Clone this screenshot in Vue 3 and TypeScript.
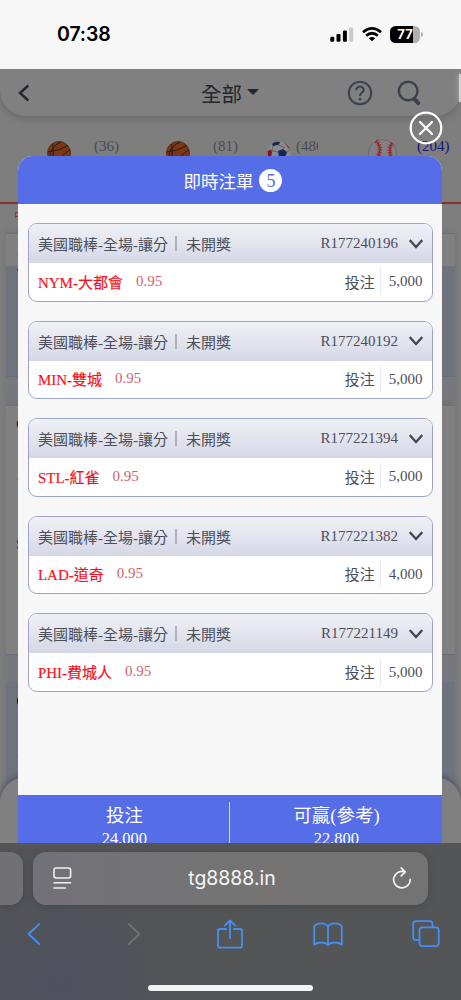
<script setup lang="ts">
interface Bet {
  team: string
  odds: string
  id: string
  stake: string
}

const bets: Bet[] = [
  { team: 'NYM-大都會', odds: '0.95', id: 'R177240196', stake: '5,000' },
  { team: 'MIN-雙城', odds: '0.95', id: 'R177240192', stake: '5,000' },
  { team: 'STL-紅雀', odds: '0.95', id: 'R177221394', stake: '5,000' },
  { team: 'LAD-道奇', odds: '0.95', id: 'R177221382', stake: '4,000' },
  { team: 'PHI-費城人', odds: '0.95', id: 'R177221149', stake: '5,000' },
]
</script>

<template>
  <div class="phone">
    <div class="status">
      <span class="clock">07:38</span>
      <div class="status-icons">
        <svg class="signal" width="24" height="16" viewBox="0 0 24 16">
          <rect x="0.3" y="9.8" width="4" height="5" rx="1.2" />
          <rect x="6.5" y="7" width="4" height="7.8" rx="1.2" />
          <rect x="12.9" y="3.6" width="4" height="11.2" rx="1.2" />
          <rect x="19.2" y="0.4" width="4" height="14.4" rx="1.2" fill="#c8c8c8" />
        </svg>
        <svg class="wifi" width="20" height="15" viewBox="0 0 20 15" fill="none" stroke="#000" stroke-width="2.7">
          <path d="M1 5.2Q10 -2.4 19 5.2" />
          <path d="M4.1 8.7Q10 3.8 15.9 8.7" />
          <path d="M6.8 11.2Q10 8.8 13.2 11.2L10 14.3Z" fill="#000" stroke="none" />
        </svg>
        <div class="battery"><span>77</span></div>
        <i class="battery-tip"></i>
      </div>
    </div>

    <div class="web">
      <div class="page">
        <div class="topbar">
          <svg class="back" width="12" height="18" viewBox="0 0 12 18" fill="none" stroke="#23262c" stroke-width="2.4"><path d="M10.3 1.5L2 9L10.3 16.5" /></svg>
          <div class="scope">全部<i></i></div>
          <svg class="help" width="26" height="26" viewBox="0 0 26 26" fill="none" stroke="#3c414e" stroke-width="2.1">
            <circle cx="13" cy="13" r="11.2" />
            <path d="M9.2 10.3C9.2 5.2 16.9 5.5 16.7 10C16.6 12.6 13 12.6 13 16" />
            <circle cx="13" cy="19.2" r="1.4" fill="#3c414e" stroke="none" />
          </svg>
          <svg class="search" width="25" height="26" viewBox="0 0 25 26" fill="none" stroke="#3c414e">
            <circle cx="11.2" cy="11" r="9.3" stroke-width="2.5" />
            <path d="M17.5 19.2L21.2 23" stroke-width="4" stroke-linecap="round" />
          </svg>
        </div>

        <div class="sports">
          <div class="sport basket">
            <svg width="24" height="24" viewBox="0 0 24 24" fill="none" stroke="#271b16" stroke-width="1">
              <circle cx="12" cy="12" r="11.5" fill="#7b3713" stroke="#5c321b" />
              <path d="M1 11Q12 10 21 4.5M5 3Q8 6 5 19M14 .8Q2 6 3 18M12 24Q14 13 23 9" />
            </svg>
            <span>(36)</span>
          </div>
          <div class="sport basket">
            <svg width="24" height="24" viewBox="0 0 24 24" fill="none" stroke="#271b16" stroke-width="1">
              <circle cx="12" cy="12" r="11.5" fill="#7b3713" stroke="#5c321b" />
              <path d="M1 11Q12 10 21 4.5M5 3Q8 6 5 19M14 .8Q2 6 3 18M12 24Q14 13 23 9" />
            </svg>
            <span>(81)</span>
          </div>
          <div class="sport soccer">
            <svg width="24" height="24" viewBox="0 0 24 24">
              <circle cx="12" cy="12" r="11.5" fill="#8a8a8c" />
              <path d="M5 3Q8 0 13 1L12 3.6L6 5ZM11 10L16 8L20 11L18 17L12 16Z" fill="#172754" />
              <path d="M.5 10L4 8.5L5 11L4 17L1 15ZM17 1.5Q22 4.5 23.3 9.5L20 5Z" fill="#84151e" />
              <path d="M6 5L5 10L11 11M11 4L17 6L16 8M20 11L23 9" fill="none" stroke="#555" stroke-width=".7" />
            </svg>
            <span>(486)</span>
          </div>
          <div class="sport baseball">
            <svg width="29" height="29" viewBox="0 0 29 29" fill="none">
              <circle cx="14.5" cy="14.5" r="14" fill="#828080" stroke="#6c6969" />
              <path d="M8 2Q16 9 7 23M24 4Q19 11 25 22" stroke="#932a31" stroke-width="1.6" />
              <path d="M8 2Q16 9 7 23M24 4Q19 11 25 22" stroke="#932a31" stroke-width="4.4" stroke-dasharray="1.1 1.3" />
            </svg>
            <span>(204)</span>
          </div>
        </div>

        <div class="league">中</div>
        <div class="panel">
          <div class="row match">1</div>
          <div class="row picked">7</div>
          <div class="row tinted"></div>
        </div>
        <div class="panel second">
          <div class="row tall"><b>C</b><span>1</span><span class="low">S</span></div>
          <div class="row tinted"></div>
          <div class="row picked long"><b>C</b><span>1</span></div>
        </div>
      </div>

      <div class="dock"></div>
      <i class="edge"></i>

      <div class="modal">
        <div class="modal-head">即時注單<span class="count">5</span></div>
        <div class="list">
          <div v-for="bet in bets" :key="bet.id" class="card">
            <div class="card-head">
              <span>美國職棒-全場-讓分</span>
              <i class="bar"></i>
              <span>未開獎</span>
              <span class="id">{{ bet.id }}</span>
              <svg width="14" height="10" viewBox="0 0 14 10" fill="none" stroke="#454952" stroke-width="2.3"><path d="M.7 1L7 8L13.3 1" /></svg>
            </div>
            <div class="card-body">
              <span class="team">{{ bet.team }}</span>
              <span class="odds">{{ bet.odds }}</span>
              <span class="label">投注</span>
              <span class="stake">{{ bet.stake }}</span>
            </div>
          </div>
        </div>
        <div class="totals">
          <div class="total"><span>投注</span><em>24,000</em></div>
          <i></i>
          <div class="total"><span>可贏(參考)</span><em>22,800</em></div>
        </div>
      </div>

      <svg class="close" width="34" height="34" viewBox="0 0 34 34" fill="none" stroke="#fff" stroke-width="2.2">
        <circle cx="17" cy="17" r="15.3" />
        <path d="M11 11L23 23M23 11L11 23" stroke-linecap="round" />
      </svg>
    </div>

    <div class="chrome">
      <div class="tabs">
        <div class="prev-tab"></div>
        <div class="address">
          <svg width="19" height="23" viewBox="0 0 19 23" fill="none" stroke="#f2f2f2" stroke-width="1.6" stroke-linecap="round">
            <rect x="1" y="1" width="16.6" height="10" rx="2.2" />
            <path d="M1 15.8H17.6M1 21H12.4" />
          </svg>
          <span>tg8888.in</span>
          <svg width="20" height="23" viewBox="0 0 20 23" fill="none" stroke="#f2f2f2" stroke-width="1.7" stroke-linecap="round" stroke-linejoin="round">
            <path d="M12.6 4.8A8.3 8.3 0 1 0 18.2 12.4M9.2 .9L13.2 4.9L9.2 8.9" />
          </svg>
        </div>
      </div>
      <div class="tools">
        <svg width="14" height="24" viewBox="0 0 14 24"><path d="M12.3 2L1.5 12L12.3 22" /></svg>
        <svg class="off" width="14" height="24" viewBox="0 0 14 24"><path d="M1.7 2L12.5 12L1.7 22" /></svg>
        <svg class="share" width="26" height="30" viewBox="-1 0 26 30"><path d="M8.2 10H2Q0 10 0 12V26.5Q0 28.7 2 28.7H22Q24 28.7 24 26.5V12Q24 10 22 10H15.8M12 19V1.5M6.8 6.6L12 1.5L17.2 6.6" /></svg>
        <svg width="30" height="25" viewBox="0 0 30 25"><path d="M15 4.4C12.4.5 4 .2 1.2 4.5V22.8C5 19.7 11.8 19.8 15 22.8C18.2 19.8 25 19.7 28.8 22.8V4.5C26 .2 17.6.5 15 4.4ZM15 4.4V22.8" /></svg>
        <svg width="28" height="28" viewBox="0 0 28 28"><path d="M7.3 20.2H4Q1.2 20.2 1.2 17.4V4Q1.2 1.2 4 1.2H17.7Q20.5 1.2 20.5 4V7.2" /><rect x="7.5" y="7.3" width="19.2" height="18.8" rx="2.8" /></svg>
      </div>
      <div class="home"></div>
    </div>
  </div>
</template>

<style>
body {
  margin: 0;
}
</style>

<style scoped>
.phone {
  width: 461px;
  height: 1000px;
  display: flex;
  flex-direction: column;
  overflow: hidden;
  background: #f7f7f7;
  font-family: "Liberation Serif", "Noto Sans CJK TC", serif;
}
.phone svg {
  display: block;
  flex: none;
}
.status {
  height: 69px;
  flex: none;
  display: flex;
  justify-content: space-between;
  box-sizing: border-box;
  padding: 0 38px 0 57px;
}
.clock {
  font: 600 19.5px/69px Inter, sans-serif;
  letter-spacing: -0.1px;
}
.status-icons {
  display: flex;
  align-items: center;
  height: 69px;
}
.wifi {
  margin: 0 8px 0 8px;
}
.battery {
  width: 30px;
  height: 17px;
  border-radius: 5.5px;
  background: linear-gradient(90deg, #000 77%, #b0b0b0 77%);
  color: #fff;
  font: 700 13px/17px Inter, sans-serif;
  text-align: center;
}
.battery-tip {
  width: 2px;
  height: 5px;
  margin-left: 1px;
  border-radius: 0 2px 2px 0;
  background: #b0b0b0;
}
.web {
  position: relative;
  height: 774px;
  flex: none;
  overflow: hidden;
  background: #7e7e7e;
}
.topbar {
  position: relative;
  height: 47px;
  display: flex;
  align-items: center;
  border-radius: 0 0 26px 26px;
  background: #808080;
  box-shadow: 0 2px 10px rgba(0, 0, 0, 0.2);
}
.back {
  margin-left: 18px;
}
.scope {
  margin-left: 171px;
  width: 146px;
  display: flex;
  align-items: center;
  font-size: 20.5px;
  color: #23262c;
}
.scope i {
  margin: 0 0 1px 5px;
  border: 6px solid transparent;
  border-top-color: #23262c;
  border-bottom: 0;
}
.search {
  margin-left: 24px;
}
.sports {
  height: 88px;
  display: flex;
  box-sizing: border-box;
  border-bottom: 2px solid #882f2c;
  font-size: 15px;
  line-height: 17px;
  color: #484b54;
}
.sport {
  width: 119px;
  display: flex;
  align-items: flex-start;
  box-sizing: border-box;
  padding-top: 21.5px;
}
.sport svg {
  margin-top: 3px;
}
.sport span {
  overflow: hidden;
}
.basket {
  padding-left: 47px;
  gap: 23px;
}
.soccer {
  width: 130px;
  padding-left: 29px;
  gap: 5px;
}
.soccer span {
  width: 22px;
}
.baseball {
  width: 93px;
  gap: 20px;
  color: #151579;
}
.baseball svg {
  margin-top: 1px;
}
.league {
  height: 29px;
  padding-left: 14px;
  font-size: 13px;
  line-height: 24px;
  color: #99302a;
}
.panel {
  margin: 0 6px;
  border-top: 1px solid #6d6f7c;
  font-size: 15px;
  color: #393c43;
  box-shadow: 0 0 8px rgba(0, 0, 0, 0.1);
}
.row {
  box-sizing: border-box;
  padding-left: 10px;
  background: #808080;
}
.match {
  height: 32px;
  line-height: 32px;
}
.picked {
  height: 110px;
  line-height: 16px;
  background: #6f737e;
}
.tinted {
  height: 28px;
  background: #77787e;
  border-top: 1px solid #696d7b;
}
.second {
  margin-top: 1px;
}
.tall {
  height: 248px;
  display: flex;
  flex-direction: column;
  padding-top: 9px;
}
.row b {
  display: block;
  height: 50px;
  line-height: 18px;
  color: #11164e;
}
.row span {
  height: 69px;
  line-height: 20px;
}
.long {
  height: 180px;
  padding-top: 10px;
}
.dock {
  position: absolute;
  left: 0;
  right: 0;
  top: 708px;
  height: 80px;
  border-radius: 26px 26px 0 0;
  background: #808080;
  box-shadow: 0 -2px 6px rgba(50, 53, 75, 0.55);
}
.edge {
  position: absolute;
  right: 0;
  top: 5px;
  width: 2px;
  height: 28px;
  background: #d2d2d2;
  box-shadow: 0 0 4px #c8c8c8;
}
.modal {
  position: absolute;
  left: 18.4px;
  top: 87px;
  width: 424px;
  height: 720px;
  display: flex;
  flex-direction: column;
  border-radius: 15px 15px 0 0;
  overflow: hidden;
  background: #f7f7f7;
}
.modal-head {
  height: 48px;
  flex: none;
  display: flex;
  align-items: center;
  justify-content: center;
  gap: 6px;
  padding-left: 5px;
  background: #556de7;
  color: #fff;
  font-size: 17.5px;
}
.count {
  width: 23px;
  height: 23px;
  border-radius: 50%;
  background: #fff;
  color: #556de7;
  font-size: 18px;
  line-height: 24px;
  text-align: center;
}
.list {
  height: 590.5px;
  flex: none;
  display: flex;
  flex-direction: column;
  gap: 19px;
  box-sizing: border-box;
  padding: 19px 9.5px 0;
}
.card {
  height: 78.6px;
  flex: none;
  box-sizing: border-box;
  border: 1px solid #9ba4cd;
  border-radius: 9px;
  overflow: hidden;
  background: #fff;
  font-size: 15px;
  color: #4b4f5a;
}
.card-head {
  height: 39px;
  display: flex;
  align-items: center;
  padding: 0 9px;
  background: linear-gradient(#f0f1f6, #d5d7e6);
}
.bar {
  width: 2px;
  height: 15px;
  margin: 0 9px 0 7px;
  background: #aeb0bb;
}
.id {
  margin: 0 11px 0 auto;
}
.card-body {
  height: 36.4px;
  display: flex;
  align-items: center;
  padding: 0 9.5px 0 9px;
}
.team {
  color: #fb0d1b;
  -webkit-text-stroke: 0.15px #fb0d1b;
}
.odds {
  margin-left: 13px;
  color: #d4606f;
}
.label {
  margin-left: auto;
}
.stake {
  margin-left: 5px;
  padding-left: 8px;
  border-left: 1.5px solid #e6e7f6;
  line-height: 26px;
}
.totals {
  flex: 1;
  display: flex;
  background: #556de7;
  color: #fff;
}
.totals > i {
  width: 1px;
  margin-top: 7px;
  margin-left: -1px;
  background: #d5dafa;
}
.total {
  flex: 1;
  display: flex;
  flex-direction: column;
  align-items: center;
  padding-top: 8px;
  font-size: 18.5px;
  line-height: 26px;
}
.total em {
  font-style: normal;
  font-size: 16.5px;
  line-height: 20px;
}
.close {
  position: absolute;
  left: 409px;
  top: 42px;
}
.chrome {
  height: 157px;
  flex: none;
  display: flex;
  flex-direction: column;
  align-items: center;
  background: radial-gradient(circle at 60px 140px, rgba(76, 79, 96, 0.75) 0, rgba(76, 79, 96, 0) 130px), #545557;
}
.tabs {
  width: 461px;
  height: 71px;
  display: flex;
  gap: 10px;
  padding-top: 9px;
  box-sizing: border-box;
}
.prev-tab {
  width: 23px;
  height: 53px;
  border-radius: 0 13px 13px 0;
  background: #717175;
  box-shadow: 0 1px 8px rgba(0, 0, 0, 0.15);
}
.address {
  width: 395px;
  height: 53px;
  display: flex;
  align-items: center;
  justify-content: space-between;
  box-sizing: border-box;
  padding: 0 16px 0 20px;
  border-radius: 13px;
  background: linear-gradient(90deg, #717178, #757473 60%, #747374);
  box-shadow: 0 1px 8px rgba(0, 0, 0, 0.15);
  color: #f5f5f5;
  font: 19.4px/53px Inter, sans-serif;
}
.tools {
  width: 461px;
  height: 40px;
  display: grid;
  grid-template-columns: 68px 132px 60px 136px 60px;
  align-items: center;
  justify-items: center;
}
.share {
  margin-top: -1px;
}
.tools svg {
  fill: none;
  stroke: #448ff6;
  stroke-width: 1.8;
  stroke-linecap: round;
  stroke-linejoin: round;
}
.tools .off {
  stroke: #707173;
}
.home {
  width: 165px;
  height: 6px;
  margin-top: 31px;
  border-radius: 3px;
  background: #f2f2f2;
}
</style>
